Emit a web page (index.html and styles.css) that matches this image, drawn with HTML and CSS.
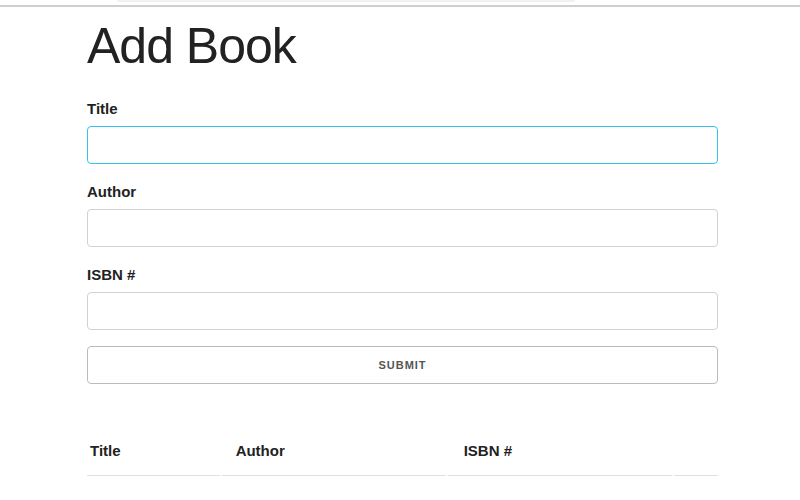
FILE: index.html
```html
<!DOCTYPE html>
<html lang="en">
<head>
<meta charset="utf-8">
<title>Add Book</title>
<link rel="stylesheet" href="styles.css">
</head>
<body>
<div class="topbar"><div class="topbar-tab"></div></div>
<main class="container">
  <h1 class="title">Add Book</h1>
  <form class="book-form">
    <label class="field-label" for="title">Title</label>
    <input class="field-input is-focused" id="title" type="text">
    <label class="field-label" for="author">Author</label>
    <input class="field-input" id="author" type="text">
    <label class="field-label" for="isbn">ISBN #</label>
    <input class="field-input" id="isbn" type="text">
    <button class="submit-btn" type="button">Submit</button>
  </form>
  <table class="book-table">
    <thead>
      <tr>
        <th class="col-title">Title</th>
        <th class="col-author">Author</th>
        <th class="col-isbn">ISBN #</th>
        <th class="col-action"></th>
      </tr>
    </thead>
    <tbody></tbody>
  </table>
</main>
</body>
</html>
```
FILE: styles.css
```css
html, body {
  margin: 0;
  padding: 0;
  background: #fff;
}
body {
  font-family: "Liberation Sans", Arial, sans-serif;
  color: #222;
}
.topbar {
  height: 5px;
  border-bottom: 2px solid #cfcfcf;
  position: relative;
}
.topbar-tab {
  position: absolute;
  left: 117px;
  width: 458px;
  top: 0;
  height: 2px;
  background: #f1f1f1;
  border-radius: 0 0 4px 4px;
}
.container {
  width: 631px;
  margin-left: 87px;
  padding-top: 9px;
}
.title {
  margin: 0 0 21px;
  font-size: 50px;
  line-height: 60px;
  font-weight: 400;
  letter-spacing: -1px;
  color: #222;
}
.book-form {
  display: flex;
  flex-direction: column;
  margin: 0;
}
.field-label {
  display: block;
  font-size: 15px;
  font-weight: 700;
  line-height: 24px;
  margin-bottom: 5px;
  color: #222;
}
.field-input {
  box-sizing: border-box;
  width: 100%;
  height: 38px;
  margin: 0 0 16px;
  padding: 6px 10px;
  border: 1px solid #d1d1d1;
  border-radius: 4px;
  background: #fff;
  font-family: inherit;
  font-size: 15px;
  outline: none;
}
.field-input.is-focused {
  border-color: #33c3f0;
}
.submit-btn {
  box-sizing: border-box;
  width: 100%;
  height: 38px;
  margin: 0;
  padding: 0 30px;
  border: 1px solid #bbb;
  border-radius: 4px;
  background: transparent;
  color: #555;
  font-family: inherit;
  font-size: 11px;
  font-weight: 700;
  letter-spacing: 1px;
  text-transform: uppercase;
  cursor: pointer;
}
.book-table {
  margin: 43px 0 0 -2px;
  border-collapse: separate;
  border-spacing: 2px 0;
  width: 635px;
}
.book-table th {
  text-align: left;
  font-size: 15px;
  font-weight: 700;
  line-height: 24px;
  padding: 12px 15px 12px 14px;
  border-bottom: 1px solid #e1e1e1;
  color: #222;
}
.book-table th.col-title {
  width: 129px;
  padding-left: 3px;
  padding-right: 0;
}
.book-table th.col-author {
  width: 194px;
}
.book-table th.col-isbn {
  width: 192px;
  padding-left: 16px;
}
.book-table th.col-action {
  width: 44px;
  padding: 12px 0;
}
```
